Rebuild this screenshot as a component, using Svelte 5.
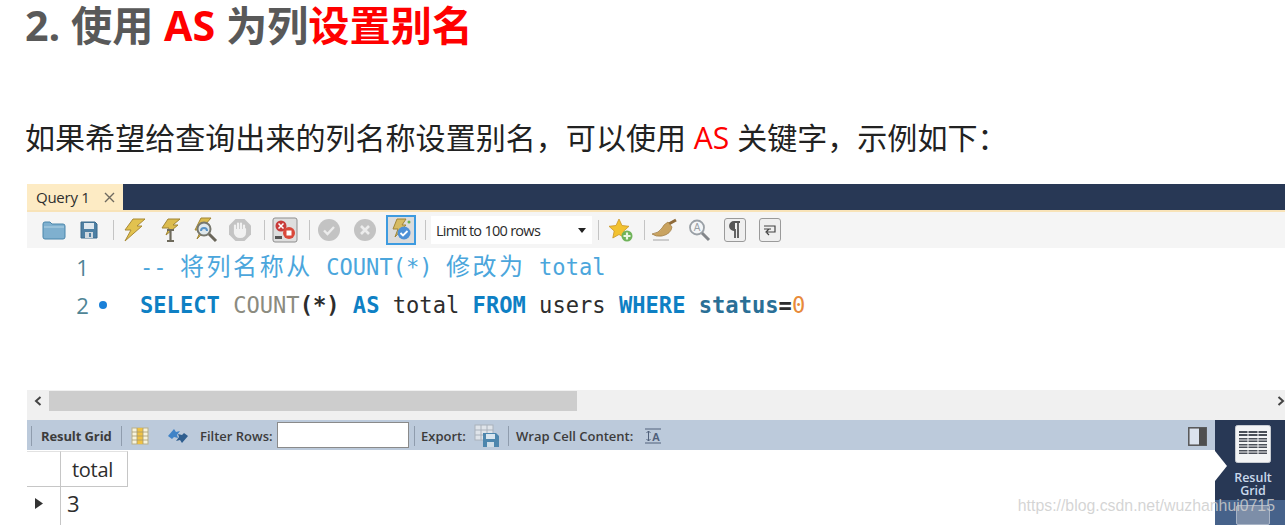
<script>
	const cjk = '将列名称从';
	const cjk2 = '修改为';
</script>

<div class="page">
	<h2>2. 使用 <em>AS</em> 为列<em>设置别名</em></h2>
	<p class="lead">如果希望给查询出来的列名称设置别名，可以使用 <em>AS</em> 关键字，示例如下：</p>

	<section class="workbench">
		<div class="tabs">
			<div class="tab">
				<span>Query 1</span>
				<svg width="11" height="11" viewBox="0 0 11 11"><path d="M1 1l9 9M10 1l-9 9" stroke="#6f6a60" stroke-width="1.4" /></svg>
			</div>
		</div>

		<div class="toolbar">
			<span class="tool">
				<svg width="24" height="20" viewBox="0 0 24 20"><path d="M1 4q0-2 2-2h5l2 2h11q2 0 2 2v11q0 2-2 2H3q-2 0-2-2z" fill="#7fb0cf" stroke="#4b86ab" /><path d="M2 7h20" stroke="#b5d4e6" /></svg>
			</span>
			<span class="tool">
				<svg width="20" height="20" viewBox="0 0 20 20"><path d="M2 2h14l2 2v14H2z" fill="#4d7fa3" stroke="#3b6a8c" /><rect x="5" y="3" width="10" height="6" fill="#dfe8ef" /><rect x="6" y="12" width="8" height="6" fill="#cfd8df" /><rect x="10" y="13" width="2" height="4" fill="#4d7fa3" /></svg>
			</span>
			<i class="sep"></i>
			<span class="tool">
				<svg width="24" height="26" viewBox="0 0 24 26"><path d="M11 2h12l-8 7h5L3 24l6-11H3z" fill="#e2c24f" stroke="#a98a35" /></svg>
			</span>
			<span class="tool">
				<svg width="24" height="26" viewBox="0 0 24 26"><path d="M10 2h12l-7 6h5L8 18l3-7H4z" fill="#dcbc4e" stroke="#a08536" /><path d="M9 13h7M9 24h7M12.500 13v11" stroke="#6e6a5c" stroke-width="2.200" /></svg>
			</span>
			<span class="tool">
				<svg width="26" height="26" viewBox="0 0 26 26"><path d="M9 1h10l-6 7h5L5 22l4-9H3z" fill="#dcbc4e" stroke="#a08536" /><circle cx="12" cy="12" r="6.500" fill="#dfe8ec" stroke="#77776d" stroke-width="2" /><path d="M9 14a3 3 0 0 1 6 0" fill="none" stroke="#5a93c5" stroke-width="2" /><path d="M17 17l7 7" stroke="#6a665a" stroke-width="3" /></svg>
			</span>
			<span class="tool">
				<svg width="24" height="24" viewBox="0 0 24 24"><path d="M7.500 1h9L23 7.500v9L16.500 23h-9L1 16.500v-9z" fill="#c4c4c4" /><path d="M7 12V7.500M10 12V5.500M13 12V5.500M16 12V7.500M7 12l0 3q1 4 5 4 5 0 5-5v-3" fill="none" stroke="#f1f1f1" stroke-width="2.200" stroke-linecap="round" /><path d="M8 11h8v6l-3 2h-3l-2-3z" fill="#f1f1f1" /></svg>
			</span>
			<i class="sep"></i>
			<span class="tool">
				<svg width="26" height="26" viewBox="0 0 26 26"><rect x="1" y="1" width="24" height="24" rx="2" fill="#dedede" stroke="#8d8d8d" /><circle cx="9" cy="9" r="5.500" fill="#c83a3a" /><path d="M6.500 6.500l5 5M11.500 6.500l-5 5" stroke="#fff" stroke-width="1.500" /><circle cx="17" cy="16" r="6" fill="#d9483a" /><rect x="14.500" y="13.500" width="5" height="5" fill="#fff" /><path d="M3 19h7v3H3z" fill="#555" /></svg>
			</span>
			<i class="sep"></i>
			<span class="tool shift">
				<svg width="24" height="24" viewBox="0 0 24 24"><circle cx="12" cy="12" r="11" fill="#c3c3c3" /><path d="M7 12.500l3.500 3.500L17 9" fill="none" stroke="#ececec" stroke-width="2.400" /></svg>
			</span>
			<span class="tool nudge">
				<svg width="24" height="24" viewBox="0 0 24 24"><circle cx="12" cy="12" r="11" fill="#c3c3c3" /><path d="M8 8l8 8M16 8l-8 8" stroke="#ececec" stroke-width="2.600" /></svg>
			</span>
			<span class="tool nudge">
				<span class="toggled">
					<svg width="24" height="24" viewBox="0 0 24 24"><path d="M8 1h9l-4 6h4L6 19l3-8H4z" fill="#d6bb62" stroke="#a08536" /><circle cx="20" cy="4" r="1.500" fill="#6ab04c" /><circle cx="15" cy="15" r="6.500" fill="#4d90d6" /><path d="M11.500 15l2.500 2.500 4.500-4.500" fill="none" stroke="#fff" stroke-width="1.800" /></svg>
				</span>
			</span>
			<i class="sep"></i>
			<div class="limit">
				<span>Limit to 100 rows</span>
				<svg width="8" height="5" viewBox="0 0 8 5"><path d="M0 0h8L4 5z" fill="#222" /></svg>
			</div>
			<i class="sep"></i>
			<span class="tool nudge">
				<svg width="24" height="24" viewBox="0 0 24 24"><path d="M10 1l3 6.500 7 .8-5.200 4.700 1.400 7L10 16.500 3.800 20l1.400-7L0 8.300l7-.8z" fill="#f2c230" stroke="#c9962a" stroke-width=".8" /><circle cx="18" cy="18" r="5.500" fill="#6fb35a" /><path d="M18 14.500v7M14.500 18h7" stroke="#e9f6e4" stroke-width="2.200" /></svg>
			</span>
			<i class="sep"></i>
			<span class="tool shift">
				<svg width="26" height="24" viewBox="0 0 26 24"><path d="M25 2l-9 5" stroke="#8e6a3a" stroke-width="3" /><path d="M17 4l4 5q-1 7-10 9-6 1-10-2 7-1 10-6 2-4 6-6z" fill="#c9a360" stroke="#9c7a42" stroke-width=".7" /><path d="M2 22h16" stroke="#ccc" stroke-width="2" /></svg>
			</span>
			<span class="tool">
				<svg width="24" height="24" viewBox="0 0 24 24"><circle cx="10" cy="9.500" r="7" fill="#f4f6f8" stroke="#9aa0a6" stroke-width="1.800" /><text x="10" y="13" font-size="10" text-anchor="middle" fill="#9aa0a6" font-family="Liberation Sans">A</text><path d="M15 15l7 7" stroke="#83868a" stroke-width="3" /></svg>
			</span>
			<span class="tool">
				<span class="key">
					<svg width="14" height="18" viewBox="0 0 14 18"><path d="M12 1H6a4 4 0 0 0 0 8h1v8M10 1v16" fill="none" stroke="#555" stroke-width="1.800" /><path d="M6 1a4 4 0 0 0 0 8h1V1z" fill="#555" /></svg>
				</span>
			</span>
			<span class="tool">
				<span class="key">
					<svg width="14" height="14" viewBox="0 0 14 14"><path d="M1 3h11v6H4M6 6L3 9l3 3M1 6h7" fill="none" stroke="#444" stroke-width="1.200" /></svg>
				</span>
			</span>
		</div>

		<div class="editor">
			<div class="line">
				<span class="num">1</span><span class="dot"></span>
				<code class="comment">-- <span class="wide">{cjk}</span> COUNT(*) <span class="wide">{cjk2}</span> total</code>
			</div>
			<div class="line">
				<span class="num">2</span><span class="dot on"></span>
				<code><b class="kw">SELECT</b> <span class="fn">COUNT</span><b>(*)</b> <b class="kw">AS</b> total <b class="kw">FROM</b> users <b class="kw">WHERE</b> <b class="col">status</b><b>=</b><span class="zero">0</span></code>
			</div>
		</div>

		<div class="scrollbar">
			<svg class="arrow" width="8" height="10" viewBox="0 0 8 10"><path d="M6.500 1L2 5l4.500 4" fill="none" stroke="#444" stroke-width="2" /></svg>
			<div class="thumb"></div>
			<svg class="arrow right" width="8" height="10" viewBox="0 0 8 10"><path d="M1.500 1L6 5 1.500 9" fill="none" stroke="#444" stroke-width="2" /></svg>
		</div>

		<div class="results">
			<div class="results-main">
				<div class="result-bar">
					<i class="rsep first"></i>
					<strong>Result Grid</strong>
					<i class="rsep"></i>
					<svg class="grid-ico" width="18" height="18" viewBox="0 0 18 18"><rect x="1" y="1" width="16" height="16" fill="#f8f4dc" stroke="#b9b08a" /><rect x="6" y="1" width="6" height="16" fill="#efc244" /><path d="M1 5h16M1 9h16M1 13h16M6 1v16M12 1v16" stroke="#a59a70" stroke-width=".8" /></svg>
					<svg class="refresh" width="22" height="20" viewBox="0 0 22 20"><path d="M1 10l6-7 2 3 4-1-3 4 1 3-4-1-2 2z" fill="#3f83c7" /><path d="M21 10l-6 7-2-3-4 1 3-4-1-3 4 1 2-2z" fill="#2f5e8f" /></svg>
					<span class="label filter">Filter Rows:</span>
					<input class="filter-input" aria-label="Filter Rows" />
					<i class="rsep"></i>
					<span class="label export">Export:</span>
					<svg class="export-ico" width="26" height="24" viewBox="0 0 26 24"><rect x="1" y="1" width="18" height="15" fill="#dfe4ea" stroke="#aab2bc" /><path d="M1 6h18M1 11h18M7 1v15M13 1v15" stroke="#aab2bc" /><path d="M9 9h13l3 3v11H9z" fill="#4d86ad" /><rect x="12" y="10" width="9" height="5" fill="#d9e6ef" /><rect x="13" y="18" width="7" height="5" fill="#cfdde7" /></svg>
					<i class="rsep"></i>
					<span class="label wrap">Wrap Cell Content:</span>
					<svg class="wrap-ico" width="16" height="16" viewBox="0 0 16 16"><path d="M0 1h16M0 15h16M3.500 3v10M1.500 5l2-2 2 2M1.500 11l2 2 2-2" fill="none" stroke="#50607a" /><text x="7" y="12.500" font-size="11" fill="#50607a" font-family="Liberation Sans">A</text></svg>
					<svg class="pane" width="19" height="19" viewBox="0 0 19 19"><rect x=".8" y=".8" width="17.400" height="17.400" fill="#dbe3ee" stroke="#555" stroke-width="1.500" /><rect x="11" y="1" width="7" height="17" fill="#4f4f4f" /></svg>
				</div>

				<div class="grid" role="table">
					<div class="cell corner"></div>
					<div class="cell head">total</div>
					<div class="cell marker">
						<svg width="8" height="11" viewBox="0 0 8 11"><path d="M0 0l8 5.500L0 11z" fill="#333" /></svg>
					</div>
					<div class="cell value">3</div>
				</div>
			</div>

			<aside class="side">
				<div class="side-item">
					<svg width="36" height="38" viewBox="0 0 36 38"><rect x=".5" y=".5" width="35" height="37" rx="2" fill="#f3f4f5" stroke="#c8ccd2" /><g fill="#4a4f58"><rect x="4" y="6" width="28" height="5" /><rect x="4" y="13" width="28" height="4" /><rect x="4" y="19" width="28" height="4" /><rect x="4" y="25" width="28" height="4" /></g><path d="M13 6v23M23 6v23M4 8.500h28M4 15h28M4 21h28M4 27h28" stroke="#f3f4f5" /></svg>
					<span>Result<br />Grid</span>
				</div>
				<div class="side-next"><div class="next-ico"></div></div>
			</aside>
		</div>

		<div class="watermark">https://blog.csdn.net/wuzhanhui0715</div>
	</section>
</div>

<style>
	:global(body) {
		margin: 0;
		background: #fff;
	}

	.page {
		height: 525px;
		overflow: hidden;
		font-family: 'Open Sans', 'Noto Sans CJK SC', sans-serif;
	}

	h2 {
		margin: 0;
		padding: 0 0 0 25px;
		height: 54px;
		font-family: 'Open Sans', 'Noto Sans CJK SC', sans-serif;
		font-size: 41.2px;
		font-weight: 700;
		line-height: 50px;
		color: #595959;
		white-space: nowrap;
	}

	em {
		font-style: normal;
		color: #f00;
	}

	.lead {
		margin: 0;
		padding: 64px 0 0 25px;
		height: 66px;
		font-size: 30.05px;
		line-height: 40px;
		color: #222;
		white-space: nowrap;
	}

	.workbench {
		position: relative;
		margin-left: 27px;
		height: 341px;
		overflow: hidden;
	}

	.tabs {
		height: 26px;
		background: #283855;
		display: flex;
	}

	.tab {
		width: 96px;
		box-sizing: border-box;
		background: #fdebc4;
		display: flex;
		align-items: center;
		gap: 14px;
		padding: 0 0 0 9px;
		font-size: 15px;
		letter-spacing: -0.25px;
		color: #2f2f2f;
	}

	.toolbar {
		height: 38px;
		box-sizing: border-box;
		border-top: 2px solid #f8e3b8;
		background: #f5f5f5;
		display: flex;
		align-items: center;
		padding-left: 9px;
	}

	.tool {
		width: 35.3px;
		height: 30px;
		flex: none;
		display: flex;
		align-items: center;
		justify-content: center;
	}

	.tool.shift {
		margin-left: -2px;
	}

	.tool.nudge {
		margin-left: 1px;
	}

	.sep {
		width: 1px;
		height: 20px;
		margin: 0 3px 0 6px;
		background: #c4c4c4;
		flex: none;
	}

	.toggled {
		width: 30px;
		height: 30px;
		box-sizing: border-box;
		border: 2px solid #3d9be0;
		background: #dcdcdc;
		display: flex;
		align-items: center;
		justify-content: center;
	}

	.key {
		width: 22px;
		height: 24px;
		box-sizing: border-box;
		border: 1px solid #9a9a9a;
		border-radius: 3px;
		background: #efefef;
		display: flex;
		align-items: center;
		justify-content: center;
	}

	.limit {
		width: 161px;
		height: 28px;
		box-sizing: border-box;
		margin-left: 2px;
		padding: 0 6px 0 5px;
		background: #fff;
		display: flex;
		align-items: center;
		justify-content: space-between;
		font-size: 14.5px;
		letter-spacing: -0.72px;
		color: #2b2b2b;
		flex: none;
	}

	.editor {
		height: 142px;
		box-sizing: border-box;
		background: #fff;
	}

	.line {
		height: 38px;
		line-height: 38px;
		display: flex;
		align-items: center;
		font-family: 'DejaVu Sans Mono', 'Noto Sans CJK SC', monospace;
		font-size: 22.1px;
		white-space: pre;
	}

	.num {
		width: 62px;
		text-align: right;
		color: #4f8596;
		font-family: 'Open Sans', sans-serif;
	}

	.dot {
		width: 8px;
		height: 8px;
		margin: 0 33px 0 10px;
		border-radius: 50%;
	}

	.dot.on {
		background: #1a80d8;
	}

	code {
		font: inherit;
		color: #2d2d2d;
	}

	code b {
		font-weight: 700;
	}

	.wide {
		font-size: 24px;
		letter-spacing: 2.6px;
	}

	.comment {
		color: #4ba6dc;
	}

	.kw {
		color: #0e80c4;
	}

	.fn {
		color: #8b8b80;
	}

	.col {
		color: #2a6f96;
	}

	.zero {
		color: #e88a3a;
	}

	.scrollbar {
		height: 30px;
		background: #f0f0f0;
		position: relative;
	}

	.thumb {
		position: absolute;
		left: 22px;
		top: 1px;
		width: 528px;
		height: 20px;
		background: #cdcdcd;
	}

	.arrow {
		position: absolute;
		left: 7px;
		top: 6px;
	}

	.arrow.right {
		left: auto;
		right: 0;
	}

	.results {
		display: flex;
		height: 105px;
	}

	.results-main {
		flex: 1;
		min-width: 0;
	}

	.result-bar {
		height: 30px;
		box-sizing: border-box;
		padding-top: 2px;
		background: #bccadb;
		display: flex;
		align-items: center;
		font-size: 13px;
		font-weight: 600;
		color: #3c3c3c;
		white-space: nowrap;
		position: relative;
	}

	.rsep {
		width: 1px;
		height: 20px;
		background: #8f9cad;
		flex: none;
		margin: 0 6px;
	}

	.rsep.first {
		margin: 0 9px 0 4px;
	}

	.result-bar strong {
		width: 73px;
		font-weight: 700;
		margin-right: 1px;
		letter-spacing: -0.1px;
	}

	.grid-ico {
		margin-left: 3px;
	}

	.refresh {
		margin-left: 18px;
	}

	.filter {
		margin-left: 11px;
		width: 77px;
	}

	.filter-input {
		width: 132px;
		height: 26px;
		box-sizing: border-box;
		margin: -2px -1px 0 0;
		border: 1px solid #8a8a8a;
		background: #fff;
		padding: 0;
		flex: none;
	}

	.export {
		width: 48px;
	}

	.export-ico {
		margin-left: 5px;
		margin-right: 2px;
	}

	.wrap {
		width: 129px;
		margin-left: 1px;
	}

	.pane {
		margin-left: auto;
		margin-right: 8px;
	}

	.grid {
		display: grid;
		grid-template-columns: 34px 67px;
		grid-template-rows: 36px 38px;
		width: 101px;
		margin-top: 1px;
		color: #2d2d2d;
		font-size: 20px;
	}

	.cell {
		box-sizing: border-box;
		border-right: 1px solid #c6c6c6;
		border-bottom: 1px solid #c6c6c6;
		display: flex;
		align-items: center;
	}

	.corner,
	.head {
		border-top: 1px solid #e2e2e2;
	}

	.head {
		padding-left: 11px;
		letter-spacing: -0.3px;
	}

	.marker {
		justify-content: center;
		border-bottom: 0;
		padding: 0 9px 6px 0;
	}

	.value {
		border-right: 0;
		border-bottom: 0;
		padding: 0 0 7px 6px;
		font-size: 22px;
	}

	.side {
		width: 70px;
		background: #283855;
		display: flex;
		flex-direction: column;
		position: relative;
	}

	.side::before {
		content: '';
		position: absolute;
		left: 0;
		top: 31px;
		border-left: 12px solid #fff;
		border-top: 15px solid transparent;
		border-bottom: 15px solid transparent;
	}

	.side-item {
		height: 90px;
		box-sizing: border-box;
		padding: 5px 0 0 6px;
		display: flex;
		flex-direction: column;
		align-items: center;
		gap: 8px;
		font-size: 12.5px;
		font-weight: 600;
		line-height: 13px;
		text-align: center;
		color: #c9d8ec;
	}

	.side-next {
		flex: 1;
		background: #46628a;
		display: flex;
		justify-content: center;
		padding: 5px 0 0 6px;
	}

	.next-ico {
		width: 34px;
		height: 20px;
		box-sizing: border-box;
		background: #7d8ea8;
		border: 1px solid #a8b4c6;
		border-radius: 2px;
	}

	.watermark {
		position: absolute;
		right: 10px;
		bottom: 9px;
		font-family: 'Liberation Sans', sans-serif;
		font-size: 15.85px;
		line-height: 20px;
		color: rgba(205, 205, 205, 0.85);
		white-space: nowrap;
	}
</style>
